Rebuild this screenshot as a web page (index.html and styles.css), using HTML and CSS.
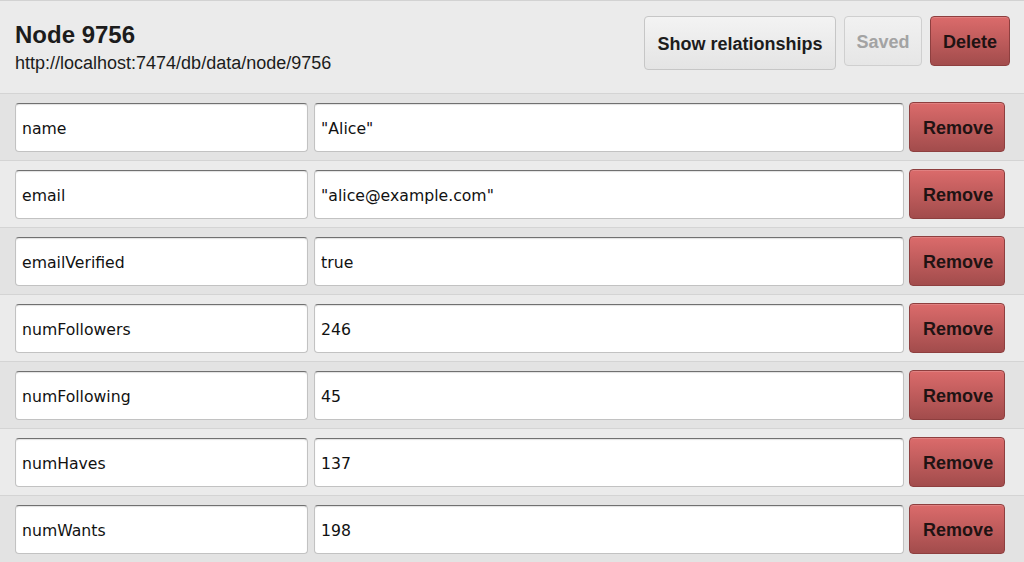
FILE: index.html
```html
<!DOCTYPE html>
<html>
<head>
<meta charset="utf-8">
<link rel="stylesheet" href="styles.css">
</head>
<body>
<div class="page">
  <header class="head">
    <div class="titles">
      <h1 class="title">Node 9756</h1>
      <div class="url">http://localhost:7474/db/data/node/9756</div>
    </div>
    <div class="actions">
      <button class="btn btn-plain btn-rel">Show relationships</button>
      <button class="btn btn-disabled">Saved</button>
      <button class="btn btn-red btn-delete">Delete</button>
    </div>
  </header>
  <div class="props">
    <div class="row odd"><input class="key" value="name"><input class="val" value="&quot;Alice&quot;"><button class="btn btn-red btn-remove">Remove</button></div>
    <div class="row"><input class="key" value="email"><input class="val" value="&quot;alice@example.com&quot;"><button class="btn btn-red btn-remove">Remove</button></div>
    <div class="row odd"><input class="key" value="emailVerified"><input class="val" value="true"><button class="btn btn-red btn-remove">Remove</button></div>
    <div class="row"><input class="key" value="numFollowers"><input class="val" value="246"><button class="btn btn-red btn-remove">Remove</button></div>
    <div class="row odd"><input class="key" value="numFollowing"><input class="val" value="45"><button class="btn btn-red btn-remove">Remove</button></div>
    <div class="row"><input class="key" value="numHaves"><input class="val" value="137"><button class="btn btn-red btn-remove">Remove</button></div>
    <div class="row odd"><input class="key" value="numWants"><input class="val" value="198"><button class="btn btn-red btn-remove">Remove</button></div>
  </div>
</div>
</body>
</html>
```
FILE: styles.css
```css
html, body {
  margin: 0;
  padding: 0;
  background: #e9e9e9;
  font-family: "Liberation Sans", Arial, sans-serif;
  color: #1a1a1a;
}
.page {
  width: 1024px;
  height: 562px;
  overflow: hidden;
  border-top: 1px solid #d2d2d2;
  box-sizing: border-box;
}
.head {
  display: flex;
  justify-content: space-between;
  align-items: flex-start;
  height: 92px;
  box-sizing: border-box;
  padding: 15px 14px 0 15px;
  background: #ebebeb;
}
.title {
  margin: 4px 0 0 0;
  font-size: 24px;
  line-height: 30px;
  font-weight: bold;
  color: #1c1c1c;
}
.url {
  margin-top: 2px;
  font-size: 18px;
  line-height: 22px;
  color: #1c1c1c;
}
.actions {
  display: flex;
  align-items: flex-start;
  gap: 8px;
}
.btn {
  font-family: "Liberation Sans", Arial, sans-serif;
  font-weight: bold;
  font-size: 18px;
  border-radius: 4px;
  cursor: pointer;
  padding: 3px 0 0 0;
  color: #1c1c1c;
}
.btn-plain {
  background: linear-gradient(#f3f3f3, #e4e4e4);
  border: 1px solid #c6c6c6;
}
.btn-rel {
  width: 192px;
  height: 54px;
}
.btn-disabled {
  width: 78px;
  height: 50px;
  color: #a3a3a3;
  background: linear-gradient(#f1f1f1, #e6e6e6);
  border: 1px solid #cfcfcf;
}
.btn-red {
  background: linear-gradient(#db6b6b, #a24c4c);
  border: 1px solid #8e3f3f;
  color: #1f1313;
  box-shadow: inset 0 1px 0 rgba(255,255,255,0.15);
}
.btn-delete {
  width: 80px;
  height: 50px;
}
.props {
  display: flex;
  flex-direction: column;
}
.row {
  display: flex;
  align-items: flex-start;
  gap: 5px;
  height: 67px;
  box-sizing: border-box;
  border-top: 1px solid #d4d4d4;
  padding: 9px 19px 0 15px;
  background: #ebebeb;
}
.row.odd {
  background: #e3e3e3;
}
input {
  height: 49px;
  box-sizing: border-box;
  border: 1px solid #c2c2c2;
  border-top-color: #707070;
  border-radius: 4px;
  background: #fff;
  padding: 2px 6px 0 6px;
  font-family: "DejaVu Sans", Verdana, sans-serif;
  font-size: 15.7px;
  color: #111;
  box-shadow: inset 0 1px 1px rgba(0,0,0,0.12);
  outline: none;
}
.key {
  width: 294px;
}
.val {
  width: 592px;
  margin-left: 1px;
}
.btn-remove {
  width: 96px;
  height: 50px;
  margin-top: -1px;
  padding-left: 2px;
}
```
